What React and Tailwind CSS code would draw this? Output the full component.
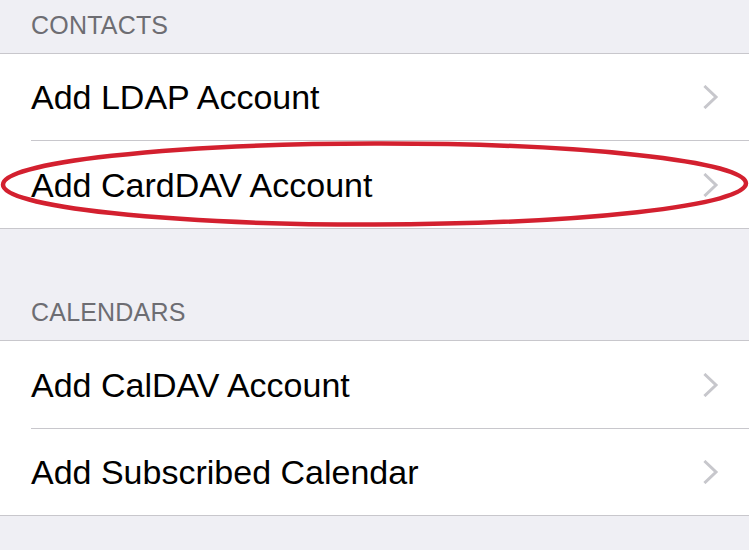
import React from "react";

function Chevron() {
  return (
    <svg width="16" height="24" viewBox="0 0 16 24" className="shrink-0">
      <polyline points="2.5,2 13,12 2.5,22" fill="none" stroke="#c7c7cc" strokeWidth="3" strokeLinecap="square" />
    </svg>
  );
}

function Row({ label, children, h = "h-[86px]" }) {
  return (
    <div className={`relative flex items-center justify-between pl-[31px] pr-[30px] bg-white ${h}`}>
      <span className="text-[34px] leading-none text-black">{label}</span>
      <Chevron />
      {children}
    </div>
  );
}

function Header({ label, h }) {
  return (
    <div className={`flex items-end pl-[31px] pb-[15px] ${h}`}>
      <span className="text-[25px] leading-none text-[#6d6d72] tracking-[0.2px]">{label}</span>
    </div>
  );
}

export default function App() {
  return (
    <div
      className="w-[749px] min-h-[550px] bg-[#efeff4] overflow-hidden"
      style={{ fontFamily: '"Liberation Sans", Arial, sans-serif' }}
    >
      <Header label="CONTACTS" h="h-[53px]" />
      <div className="border-y border-[#c8c7cc] bg-white">
        <Row label="Add LDAP Account" h="h-[86px]" />
        <div className="ml-[31px] h-px bg-[#c8c7cc]" />
        <Row label="Add CardDAV Account" h="h-[87px]">
          <svg
            className="absolute left-0 top-0 pointer-events-none"
            width="749"
            height="87"
            viewBox="0 0 749 87"
          >
            <ellipse cx="374.5" cy="43" rx="371.5" ry="40.5" fill="none" stroke="#d3202f" strokeWidth="4.5" transform="rotate(-0.1 374.5 43)" />
          </svg>
        </Row>
      </div>
      <Header label="CALENDARS" h="h-[111px]" />
      <div className="border-y border-[#c8c7cc] bg-white">
        <Row label="Add CalDAV Account" h="h-[87px]" />
        <div className="ml-[31px] h-px bg-[#c8c7cc]" />
        <Row label="Add Subscribed Calendar" h="h-[86px]" />
      </div>
    </div>
  );
}
